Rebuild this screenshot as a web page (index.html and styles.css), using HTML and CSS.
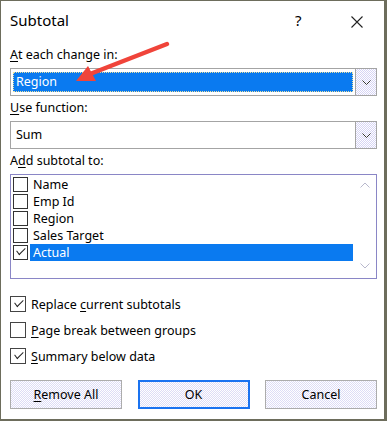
FILE: index.html
```html
<!DOCTYPE html>
<html lang="en">
<head>
    <meta charset="UTF-8">
    <title>Subtotal</title>
    <link rel="stylesheet" href="styles.css">
</head>
<body>

    <div class="dialog">
        <div class="titlebar">
            <span class="title">Subtotal</span>
            <span class="help">?</span>
            <span class="close">
                <svg width="12" height="12" viewBox="0 0 12 12">
                    <path d="M0.5 0.5 L11.5 11.5 M11.5 0.5 L0.5 11.5" stroke="#222" stroke-width="1.1" fill="none"/>
                </svg>
            </span>
        </div>

        <div class="content">
            <div class="label"><u>A</u>t each change in:</div>
            <div class="combo">
                <div class="combo-value"><span class="selected">Region</span></div>
                <div class="combo-btn">
                    <svg width="9" height="5" viewBox="0 0 9 5"><path d="M0.5 0.5 L4.5 4.5 L8.5 0.5" stroke="#333" fill="none"/></svg>
                </div>
            </div>

            <div class="label gap"><u>U</u>se function:</div>
            <div class="combo">
                <div class="combo-value"><span class="plain">Sum</span></div>
                <div class="combo-btn">
                    <svg width="9" height="5" viewBox="0 0 9 5"><path d="M0.5 0.5 L4.5 4.5 L8.5 0.5" stroke="#333" fill="none"/></svg>
                </div>
            </div>

            <div class="label gap">A<u>d</u>d subtotal to:</div>
            <div class="listbox">
                <div class="items">
                    <div class="item"><span class="box"></span><span class="text">Name</span></div>
                    <div class="item"><span class="box"></span><span class="text">Emp Id</span></div>
                    <div class="item"><span class="box"></span><span class="text">Region</span></div>
                    <div class="item"><span class="box"></span><span class="text">Sales Target</span></div>
                    <div class="item active"><span class="box checked"></span><span class="text">Actual</span></div>
                </div>
                <div class="scroll">
                    <svg width="10" height="6" viewBox="0 0 10 6"><path d="M0.5 5.5 L5 1 L9.5 5.5" stroke="#b8b8cc" fill="none"/></svg>
                    <svg width="10" height="6" viewBox="0 0 10 6"><path d="M0.5 0.5 L5 5 L9.5 0.5" stroke="#b8b8cc" fill="none"/></svg>
                </div>
            </div>

            <div class="options">
                <div class="option"><span class="box checked"></span><span>Replace <u>c</u>urrent subtotals</span></div>
                <div class="option"><span class="box"></span><span><u>P</u>age break between groups</span></div>
                <div class="option"><span class="box checked"></span><span><u>S</u>ummary below data</span></div>
            </div>

            <div class="buttons">
                <div class="button"><u>R</u>emove All</div>
                <div class="button default">OK</div>
                <div class="button">Cancel</div>
            </div>
        </div>

        <!-- red pointer over the first combo -->
        <svg class="pointer" width="387" height="421" viewBox="0 0 387 421">
            <line x1="167" y1="44" x2="90" y2="74" stroke="#f0443a" stroke-width="4.5" stroke-linecap="round"/>
            <polygon points="76,81 96,81 88,66" fill="#f0443a"/>
        </svg>
    </div>

</body>
</html>
```

FILE: styles.css
```css
body {
    margin: 0;
    font-family: "Noto Sans", "Open Sans", sans-serif;
    font-size: 12.5px;
    color: #000;
}
u {
    text-decoration-thickness: 1px;
    text-underline-offset: 2px;
}
.dialog {
    position: relative;
    width: 387px;
    height: 421px;
    box-sizing: border-box;
    border: 1px solid #6d6d5c;
    border-right-width: 3px;
    border-bottom-width: 2px;
    background-color: #fff;
}
.titlebar {
    display: flex;
    align-items: flex-start;
    height: 46px;
    padding-left: 9px;
}
.title {
    flex: 1;
    font-size: 15px;
    line-height: 20px;
    margin-top: 9px;
}
.help {
    font-size: 15px;
    line-height: 20px;
    margin-top: 9px;
    width: 56px;
}
.close {
    margin-top: 14px;
    width: 33px;
}
.content {
    padding: 0 7px 0 9px;
}
.label {
    line-height: 16px;
    margin-bottom: 5px;
}
.label.gap {
    margin-top: 4px;
}
.combo {
    display: flex;
    height: 28px;
    box-sizing: border-box;
    border: 1px solid #a4a4a4;
}
.combo-value {
    flex: 1;
    padding: 3px 2px 3px 2px;
    display: flex;
}
.selected {
    flex: 1;
    background-color: #0a7af0;
    color: #fff;
    line-height: 20px;
    padding-left: 3px;
    outline: 1px dotted #e8e0a0;
    outline-offset: -1px;
}
.plain {
    line-height: 20px;
    padding-left: 3px;
}
.combo-btn {
    width: 21px;
    box-sizing: border-box;
    border-left: 1px solid #a4a4a4;
    display: flex;
    align-items: center;
    justify-content: center;
    background-color: #ecebfa;
    background-image: repeating-conic-gradient(#d6d4f4 0 25%, #ffffff 0 50%);
    background-size: 2px 2px;
}
.listbox {
    display: flex;
    height: 105px;
    box-sizing: border-box;
    border: 1px solid #8a86c6;
    margin-top: 1px;
}
.items {
    flex: 1;
    padding: 1px 0 0 2px;
}
.item {
    display: flex;
    align-items: center;
    height: 17px;
}
.item .box {
    width: 15px;
    height: 15px;
    margin-right: 2px;
}
.item .text {
    padding-left: 3px;
    line-height: 17px;
    flex: 1;
}
.item.active .text {
    background-color: #0a7af0;
    color: #fff;
}
.scroll {
    width: 23px;
    display: flex;
    flex-direction: column;
    justify-content: space-between;
    align-items: center;
    padding: 7px 0 9px 0;
}
.box {
    box-sizing: border-box;
    border: 1px solid #333;
    background-color: #fff;
    position: relative;
    flex-shrink: 0;
}
.box.checked::after {
    content: "";
    position: absolute;
    left: 3px;
    top: 2px;
    width: 8px;
    height: 4px;
    border-left: 1px solid #222;
    border-bottom: 1px solid #222;
    transform: rotate(-45deg) skewX(-8deg);
    transform-origin: 40% 60%;
}
.options {
    margin-top: 12px;
}
.option {
    display: flex;
    align-items: center;
    height: 26px;
}
.option .box {
    width: 16px;
    height: 16px;
    margin-right: 5px;
    border-color: #444;
}
.option .box.checked::after {
    left: 4px;
    top: 3px;
}
.buttons {
    display: flex;
    justify-content: space-between;
    margin-top: 11px;
}
.button {
    width: 112px;
    height: 29px;
    box-sizing: border-box;
    border: 1px solid #acacac;
    display: flex;
    align-items: center;
    justify-content: center;
    background-color: #ecebfa;
    background-image: repeating-conic-gradient(#dddcf6 0 25%, #ffffff 0 50%);
    background-size: 2px 2px;
}
.button.default {
    border: 2px solid #1a73f0;
}
.pointer {
    position: absolute;
    left: -1px;
    top: -1px;
    pointer-events: none;
}
```
